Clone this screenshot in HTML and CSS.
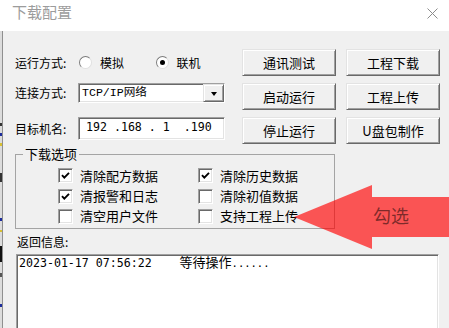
FILE: index.html
```html
<!DOCTYPE html>
<html lang="zh-CN">
<head>
<meta charset="utf-8">
<title>下载配置</title>
<link rel="stylesheet" href="styles.css">
</head>
<body>
<div class="window">
  <div class="strip"></div>
  <div class="dialog">
    <div class="titlebar">
      <span class="title">下载配置</span>
      <svg class="close" width="11" height="11" viewBox="0 0 11 11"><path d="M0.5 0.5 L10.5 10.5 M10.5 0.5 L0.5 10.5" stroke="#8c8c8c" stroke-width="1" fill="none"/></svg>
    </div>
    <div class="content">
      <div class="top">
        <div class="form-row r1">
          <span class="label">运行方式:</span>
          <span class="radio-item first"><span class="radio"></span>模拟</span>
          <span class="radio-item"><span class="radio checked"></span>联机</span>
        </div>
        <button class="btn raised">通讯测试</button>
        <button class="btn raised">工程下载</button>

        <div class="form-row">
          <span class="label">连接方式:</span>
          <div class="combo sunken">
            <span class="combo-text">TCP/IP网络</span>
            <span class="combo-btn raised"><span class="tri"></span></span>
          </div>
        </div>
        <button class="btn raised">启动运行</button>
        <button class="btn raised">工程上传</button>

        <div class="form-row">
          <span class="label">目标机名:</span>
          <div class="ip sunken">192 .168 . 1  .190</div>
        </div>
        <button class="btn raised">停止运行</button>
        <button class="btn raised">U盘包制作</button>
      </div>

      <fieldset class="group">
        <legend>下载选项</legend>
        <div class="checks">
          <span class="check"><span class="cbox sunken"><svg width="11" height="11" viewBox="0 0 11 11"><polyline points="2,5.2 4.3,7.6 9,2.8" fill="none" stroke="#000" stroke-width="1.9"/></svg></span>清除配方数据</span>
          <span class="check"><span class="cbox sunken"><svg width="11" height="11" viewBox="0 0 11 11"><polyline points="2,5.2 4.3,7.6 9,2.8" fill="none" stroke="#000" stroke-width="1.9"/></svg></span>清除历史数据</span>
          <span class="check"><span class="cbox sunken"><svg width="11" height="11" viewBox="0 0 11 11"><polyline points="2,5.2 4.3,7.6 9,2.8" fill="none" stroke="#000" stroke-width="1.9"/></svg></span>清报警和日志</span>
          <span class="check"><span class="cbox sunken"></span>清除初值数据</span>
          <span class="check"><span class="cbox sunken"></span>清空用户文件</span>
          <span class="check"><span class="cbox sunken"></span>支持工程上传</span>
        </div>
      </fieldset>

      <div class="log-label">返回信息:</div>
      <div class="log sunken"><span class="ts">2023-01-17 07:56:22    </span><span class="msg">等待操作</span><span class="dots">......</span></div>
    </div>
  </div>

  <svg class="arrow" width="156" height="66" viewBox="293 184 156 66">
    <polygon points="294,217 372,185 372,197 449,197 449,237 372,237 372,249" fill="rgba(255,0,0,0.65)"/>
    <text class="arrow-text" x="373" y="223">勾选</text>
  </svg>
</div>
</body>
</html>
```

FILE: styles.css
```css
html, body {
  margin: 0;
  padding: 0;
}

body {
  background: #f0f0f0;
  font-family: "Noto Sans CJK SC", "Noto Sans", sans-serif;
  font-size: 12px;
  color: #000;
  overflow: hidden;
}

.window {
  position: relative;
  width: 449px;
  height: 328px;
  display: flex;
  overflow: hidden;
}

.strip {
  width: 3px;
  flex: none;
  background:
    linear-gradient(to bottom, #fff 0 31px, transparent 31px),
    linear-gradient(to bottom,
      transparent 0 123px, #333 123px 126px,
      transparent 126px 133px, #1c2c9c 133px 136px,
      transparent 136px 143px, #d8c030 143px 146px,
      transparent 146px 173px, #333 173px 182px,
      transparent 182px 218px, #1c2c9c 218px 221px,
      transparent 221px 230px, #d8c030 230px 232px,
      transparent 232px 246px, #111 246px 262px,
      transparent 262px 273px, #555 273px 277px,
      transparent 277px 304px, #1c2c9c 304px 307px,
      transparent 307px) 0 0 / 2px 100% no-repeat,
    linear-gradient(to right, #dcdcdc 0 2px, #8f8f8f 2px);
}

.dialog {
  flex: 1;
  display: flex;
  flex-direction: column;
  background: #f0f0f0;
}

.titlebar {
  height: 31px;
  flex: none;
  box-sizing: border-box;
  background: #fff;
  display: flex;
  justify-content: space-between;
  align-items: flex-start;
  padding: 4px 11px 0 9px;
}

.title {
  font-size: 15px;
  line-height: 16px;
  color: #9c9c9c;
}

.close {
  margin-top: 4px;
  display: block;
}

.content {
  padding: 18px 9px 0 12px;
}

.top {
  display: grid;
  grid-template-columns: 217px 94px 94px;
  grid-auto-rows: 27px;
  column-gap: 10px;
  row-gap: 7px;
}

.form-row {
  display: flex;
  align-items: center;
  align-self: start;
}

.form-row.r1 {
  height: 27px;
}

.label {
  width: 63px;
  flex: none;
  font-size: 12px;
  line-height: 14px;
}

.radio-item {
  display: flex;
  align-items: center;
  gap: 8px;
  width: 84px;
  font-size: 12px;
  line-height: 14px;
}

.radio-item.first {
  margin-left: 1px;
}

.radio {
  position: relative;
  width: 13px;
  height: 13px;
  box-sizing: border-box;
  border-radius: 50%;
  background: #fff;
  border: 1px solid;
  border-color: #7c7c7c #e0e0e0 #e0e0e0 #7c7c7c;
  flex: none;
}

.radio.checked::after {
  content: "";
  position: absolute;
  left: 3px;
  top: 3px;
  width: 5px;
  height: 5px;
  border-radius: 50%;
  background: #000;
}

.sunken {
  box-sizing: border-box;
  background: #fff;
  border: 1px solid;
  border-color: #a0a0a0 #fff #fff #a0a0a0;
  box-shadow: inset 1px 1px #696969, inset -1px -1px #e3e3e3;
}

.raised {
  box-sizing: border-box;
  background: #f0f0f0;
  border: 1px solid;
  border-color: #e3e3e3 #696969 #696969 #e3e3e3;
  box-shadow: inset 1px 1px #fff, inset -1px -1px #a0a0a0;
}

.combo {
  width: 147px;
  height: 20px;
  display: flex;
}

.combo-text {
  padding-left: 3px;
  font-family: "Liberation Mono", "Noto Sans CJK SC", monospace;
  font-size: 11.6px;
  line-height: 18px;
}

.combo-btn {
  margin-left: auto;
  width: 21px;
  height: 18px;
  display: flex;
  align-items: center;
  justify-content: center;
}

.tri {
  width: 0;
  height: 0;
  border-left: 3.5px solid transparent;
  border-right: 3.5px solid transparent;
  border-top: 4px solid #000;
  margin-top: 1px;
}

.ip {
  width: 147px;
  height: 23px;
  padding-left: 7px;
  font-family: "DejaVu Sans Mono", monospace;
  font-size: 11.6px;
  line-height: 19px;
  white-space: pre;
}

.btn {
  font-family: "Noto Sans CJK SC", sans-serif;
  font-size: 13px;
  color: #000;
  padding: 0;
  margin: 0;
  width: 94px;
  height: 27px;
}

.group {
  margin: 3px 0 0 0;
  width: 320px;
  box-sizing: border-box;
  border: 1px solid #a4a4a4;
  padding: 4px 0 2px 7px;
  min-inline-size: 0;
}

.group legend {
  padding: 0 2px;
  font-size: 13px;
  line-height: 14px;
}

.checks {
  display: grid;
  grid-template-columns: 140px auto;
  grid-template-rows: 21px 20px 20px;
  margin-left: 35px;
}

.check {
  display: flex;
  align-items: center;
  gap: 7px;
  font-size: 13px;
  line-height: 14px;
}

.cbox {
  width: 15px;
  height: 15px;
  flex: none;
  display: flex;
  align-items: center;
  justify-content: center;
}

.cbox svg {
  display: block;
}

.log-label {
  margin: 6px 0 0 2px;
  font-size: 12px;
  line-height: 14px;
}

.log {
  margin: 5px 0 0 1px;
  width: 423px;
  height: 80px;
  padding: 0 0 0 2px;
  line-height: 14px;
  white-space: pre;
}

.ts, .dots {
  font-family: "DejaVu Sans Mono", monospace;
  font-size: 11.6px;
}

.dots {
  font-size: 10.5px;
}

.msg {
  font-size: 13px;
}

.arrow {
  position: absolute;
  left: 293px;
  top: 184px;
}

.arrow-text {
  font-family: "Noto Sans CJK SC", sans-serif;
  font-size: 18px;
  fill: rgba(0, 0, 0, 0.5);
}
```
